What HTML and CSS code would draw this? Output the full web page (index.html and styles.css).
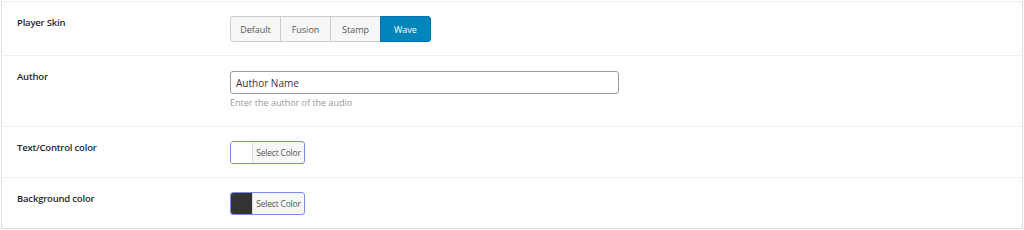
FILE: index.html
```html
<!DOCTYPE html>
<html lang="en">
<head>
  <meta charset="UTF-8">
  <title>Player Settings</title>
  <link rel="stylesheet" href="styles.css">
</head>
<body>

  <!-- 설정 테이블 -->
  <div class="settings">

    <div class="setting-row">
      <div class="setting-label">Player Skin</div>
      <div class="setting-field">
        <div class="btn-group">
          <button class="btn-skin">Default</button>
          <button class="btn-skin">Fusion</button>
          <button class="btn-skin">Stamp</button>
          <button class="btn-skin active">Wave</button>
        </div>
      </div>
    </div>

    <div class="setting-row">
      <div class="setting-label">Author</div>
      <div class="setting-field">
        <input type="text" class="text-input" value="Author Name" />
        <p class="help">Enter the author of the audio</p>
      </div>
    </div>

    <div class="setting-row">
      <div class="setting-label">Text/Control color</div>
      <div class="setting-field">
        <button class="color-picker">
          <span class="swatch"></span>
          <span class="picker-text">Select Color</span>
        </button>
      </div>
    </div>

    <div class="setting-row">
      <div class="setting-label">Background color</div>
      <div class="setting-field">
        <button class="color-picker">
          <span class="swatch dark"></span>
          <span class="picker-text">Select Color</span>
        </button>
      </div>
    </div>

  </div>

</body>
</html>
```

FILE: styles.css
```css
body {
  margin: 0;
  padding: 0;
  font-family: "Open Sans", "Liberation Sans", sans-serif;
  background: #fff;
  color: #23282d;
}
.settings {
  width: 1019px;
  margin: 1px 0 0 1px;
  border: 1px solid #dcdcdc;
  border-top: none;
  padding-left: 1px;
}
.setting-row {
  display: flex;
  border-top: 1px solid #efefef;
  padding: 14px 0 13px;
}
.setting-label {
  width: 213px;
  padding-left: 14px;
  font-size: 9.5px;
  font-weight: 600;
  letter-spacing: -0.2px;
  line-height: 12px;
  padding-top: 1px;
}
.setting-field {
  flex: 1;
}
.btn-group {
  display: flex;
}
.btn-skin {
  width: 51px;
  height: 26px;
  padding: 0;
  font-family: inherit;
  font-size: 9px;
  color: #555;
  background: #f7f7f7;
  border: 1px solid #ccc;
  margin-left: -1px;
  cursor: pointer;
}
.btn-skin:first-child {
  margin-left: 0;
  border-radius: 3px 0 0 3px;
}
.btn-skin:last-child {
  border-radius: 0 3px 3px 0;
}
.btn-skin.active {
  background: #0085ba;
  border-color: #0073aa;
  color: #fff;
}
.text-input {
  display: block;
  width: 389px;
  height: 23px;
  padding: 0 5px;
  box-sizing: border-box;
  font-family: inherit;
  font-size: 10px;
  color: #32373c;
  border: 1px solid #999;
  border-radius: 3px;
  margin-top: 1px;
}
.help {
  margin: 3px 0 4px;
  font-size: 9px;
  color: #999;
  line-height: 12px;
}
.color-picker {
  display: flex;
  height: 23px;
  padding: 0;
  border: 1px solid #7e89ee;
  border-radius: 3px;
  background: #f7f7f7;
  overflow: hidden;
  cursor: pointer;
}
.swatch {
  width: 21px;
  height: 100%;
  background: #fff;
  border-right: 1px solid #ddd;
}
.swatch.dark {
  background: #333;
}
.picker-text {
  width: 51px;
  line-height: 21px;
  font-family: "Open Sans", "Liberation Sans", sans-serif;
  font-size: 8.5px;
  letter-spacing: -0.2px;
  color: #555;
  text-align: center;
}
```
